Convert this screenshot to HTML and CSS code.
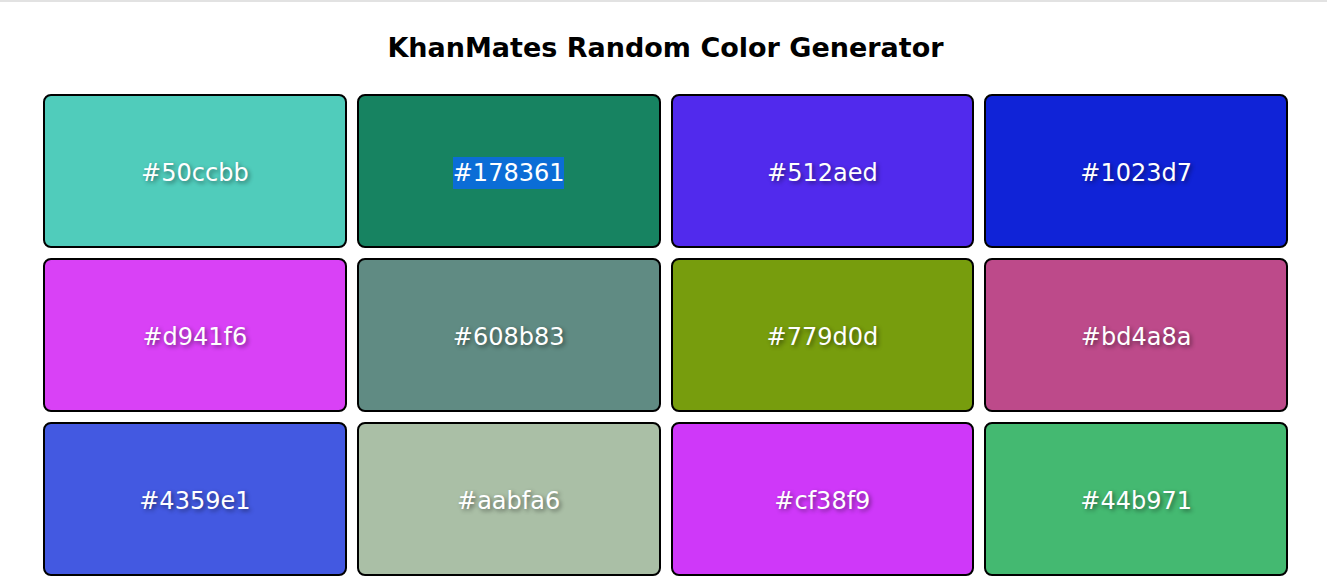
FILE: index.html
```html
<!DOCTYPE html>
<html lang="en">

<head>
    <meta charset="UTF-8">
    <meta name="viewport" content="width=device-width, initial-scale=1.0">
    <title>Random Color Generator</title>
    <link rel="stylesheet" href="styles.css">
</head>

<body>
    <div class="container">
        <h2>KhanMates Random Color Generator</h2>
        <div class="palette">
            <div class="swatch" style="background-color: #50ccbb;"><span>#50ccbb</span></div>
            <div class="swatch" style="background-color: #178361;"><span class="picked">#178361</span></div>
            <div class="swatch" style="background-color: #512aed;"><span>#512aed</span></div>
            <div class="swatch" style="background-color: #1023d7;"><span>#1023d7</span></div>
            <div class="swatch" style="background-color: #d941f6;"><span>#d941f6</span></div>
            <div class="swatch" style="background-color: #608b83;"><span>#608b83</span></div>
            <div class="swatch" style="background-color: #779d0d;"><span>#779d0d</span></div>
            <div class="swatch" style="background-color: #bd4a8a;"><span>#bd4a8a</span></div>
            <div class="swatch" style="background-color: #4359e1;"><span>#4359e1</span></div>
            <div class="swatch" style="background-color: #aabfa6;"><span>#aabfa6</span></div>
            <div class="swatch" style="background-color: #cf38f9;"><span>#cf38f9</span></div>
            <div class="swatch" style="background-color: #44b971;"><span>#44b971</span></div>
        </div>
    </div>
</body>

</html>
```

FILE: styles.css
```css
body {
    margin: 0;
    font-family: "Comic Sans MS", "DejaVu Sans", sans-serif;
    background-color: #fff;
    border-top: 2px solid #e2e2e2;
}

.container {
    padding: 0 39px 0 43px;
}

h2 {
    margin: 30px 0 31px;
    text-align: center;
    font-size: 27px;
    font-weight: bold;
    color: #000;
}

.palette {
    display: grid;
    grid-template-columns: repeat(4, 1fr);
    grid-auto-rows: 154px;
    gap: 10px;
}

.swatch {
    display: flex;
    align-items: center;
    justify-content: center;
    padding-top: 3px;
    border: 2px solid #000;
    border-radius: 8px;
    box-sizing: border-box;
    color: #fff;
    font-size: 24px;
    text-shadow: 2px 2px 4px rgba(0, 0, 0, 0.45);
}

.swatch span {
    padding: 2px 0;
}

.picked {
    background-color: #0b6dd6;
    text-shadow: none;
}
```
